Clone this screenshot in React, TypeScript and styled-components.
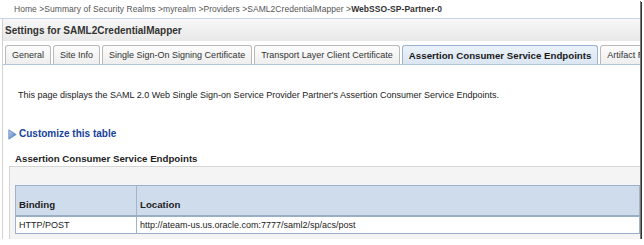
import React from "react";
import styled, { createGlobalStyle, css } from "styled-components";

const GlobalStyle = createGlobalStyle`
  html, body { margin: 0; padding: 0; background: #ffffff; }
  body { font-family: "Liberation Sans", Arial, sans-serif; color: #222; }
`;

const Frame = styled.div`
  width: 640px;
  height: 239px;
  overflow: hidden;
  background: #ffffff;
  display: flex;
  flex-direction: column;
  box-shadow: 1px 1px 0 #777, 2px 2px 0 #333;
`;

const Breadcrumb = styled.div`
  height: 18px;
  flex: none;
  display: flex;
  align-items: center;
  padding-left: 14px;
  border-bottom: 1px solid #c9d6e4;
  font-size: 8.5px;
  letter-spacing: 0.05px;
  color: #555;
  white-space: nowrap;
`;

const Crumb = styled.span<{ $current?: boolean }>`
  font-weight: ${(p) => (p.$current ? 700 : 400)};
  color: ${(p) => (p.$current ? "#333" : "#555")};
`;

const TitleBar = styled.div`
  height: 22px;
  flex: none;
  margin-left: 2px;
  border-left: 1px solid #d0d0d0;
  padding-left: 2px;
  display: flex;
  align-items: center;
  background: linear-gradient(#f7f7f7, #e8e8e8);
  font-size: 10px;
  font-weight: 700;
  color: #333;
  white-space: nowrap;
`;

const Panel = styled.div`
  flex: 1;
  min-height: 0;
  margin-left: 2px;
  border-left: 1px solid #d2d2d2;
  display: flex;
  flex-direction: column;
`;

const TabBar = styled.div`
  flex: none;
  display: flex;
  gap: 2px;
  padding: 4px 0 0 2px;
  border-bottom: 1px solid #b0c5dc;
  white-space: nowrap;
`;

const Tab = styled.div<{ $active?: boolean }>`
  flex: none;
  height: 18px;
  padding: 0 6px;
  display: flex;
  align-items: center;
  border: 1px solid #bababa;
  border-bottom: none;
  border-radius: 3px 3px 0 0;
  background: linear-gradient(#fcfcfc, #eeeeee);
  font-size: 9px;
  color: #333;
  ${(p) =>
    p.$active &&
    css`
      border-color: #9bb3ce;
      background: linear-gradient(#eaf1f8, #dbe6f2);
      font-weight: 700;
      font-size: 9.7px;
      color: #1a1a1a;
    `}
`;

const Description = styled.p`
  flex: none;
  margin: 25px 0 0 15px;
  line-height: 11px;
  font-size: 9px;
  color: #222;
  white-space: nowrap;
`;

const CustomizeRow = styled.div`
  flex: none;
  margin: 27px 0 0 5px;
  height: 12px;
  display: flex;
  align-items: center;
  gap: 2px;
`;

const CustomizeLink = styled.a`
  font-size: 10px;
  font-weight: 700;
  color: #17429a;
  text-decoration: none;
  line-height: 12px;
`;

const SectionHeading = styled.h3`
  flex: none;
  margin: 13px 0 0 12px;
  height: 12px;
  line-height: 12px;
  font-size: 9.7px;
  font-weight: 700;
  color: #1e1e1e;
  white-space: nowrap;
`;

const TableBox = styled.div`
  flex: 1;
  margin: 1px 0 0 6px;
  border-top: 1px solid #d6d6d6;
  border-left: 1px solid #d6d6d6;
  background: #f4f4f4;
  padding: 18px 0 0 5px;
`;

const Table = styled.table`
  width: 100%;
  border-collapse: collapse;
  background: #ffffff;
  border-left: 1px solid #9fb1c8;
  border-top: 1px solid #9fb1c8;
`;

const HeadCell = styled.th<{ $width?: number }>`
  width: ${(p) => (p.$width ? `${p.$width}px` : "auto")};
  padding: 13px 0 5px 3px;
  line-height: 11px;
  vertical-align: bottom;
  text-align: left;
  background: #cfdcec;
  border-right: 1px solid #a3b4ca;
  border-bottom: 2px solid #9aaec6;
  font-size: 9.7px;
  font-weight: 700;
  color: #1e1e1e;
`;

const Cell = styled.td`
  padding: 2px 0 2px 3px;
  line-height: 12px;
  border-right: 1px solid #a3b4ca;
  border-bottom: 1px solid #9aaec6;
  font-size: 9px;
  color: #222;
  white-space: nowrap;
`;

const DisclosureIcon = () => (
  <svg width="9" height="11" viewBox="0 0 9 11">
    <defs>
      <linearGradient id="tri" x1="0" y1="0" x2="1" y2="1">
        <stop offset="0" stopColor="#b9d0ef" />
        <stop offset="1" stopColor="#4a78bd" />
      </linearGradient>
    </defs>
    <polygon points="0.8,0.8 8.2,5.5 0.8,10.2" fill="url(#tri)" stroke="#5f86c2" strokeWidth="0.8" />
  </svg>
);

const tabs = [
  "General",
  "Site Info",
  "Single Sign-On Signing Certificate",
  "Transport Layer Client Certificate",
  "Assertion Consumer Service Endpoints",
  "Artifact Resolution Service Endpoints",
];

export default function App() {
  return (
    <>
      <GlobalStyle />
      <Frame>
        <Breadcrumb>
          <Crumb>Home &gt;Summary of Security Realms &gt;myrealm &gt;Providers &gt;SAML2CredentialMapper &gt;</Crumb>
          <Crumb $current>WebSSO-SP-Partner-0</Crumb>
        </Breadcrumb>
        <TitleBar>Settings for SAML2CredentialMapper</TitleBar>
        <Panel>
          <TabBar>
            {tabs.map((t) => (
              <Tab key={t} $active={t === "Assertion Consumer Service Endpoints"}>
                {t}
              </Tab>
            ))}
          </TabBar>
          <Description>
            This page displays the SAML 2.0 Web Single Sign-on Service Provider Partner's Assertion Consumer Service
            Endpoints.
          </Description>
          <CustomizeRow>
            <DisclosureIcon />
            <CustomizeLink href="#">Customize this table</CustomizeLink>
          </CustomizeRow>
          <SectionHeading>Assertion Consumer Service Endpoints</SectionHeading>
          <TableBox>
            <Table>
              <thead>
                <tr>
                  <HeadCell $width={117}>Binding</HeadCell>
                  <HeadCell>Location</HeadCell>
                </tr>
              </thead>
              <tbody>
                <tr>
                  <Cell>HTTP/POST</Cell>
                  <Cell>http://ateam-us.us.oracle.com:7777/saml2/sp/acs/post</Cell>
                </tr>
              </tbody>
            </Table>
          </TableBox>
        </Panel>
      </Frame>
    </>
  );
}
